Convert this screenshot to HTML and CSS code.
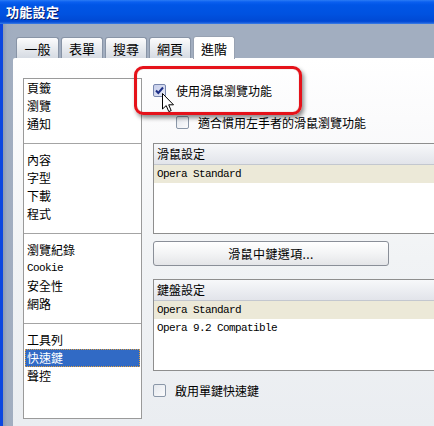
FILE: index.html
```html
<!DOCTYPE html>
<html>
<head>
<meta charset="utf-8">
<link rel="stylesheet" href="styles.css">
</head>
<body>
<div class="window">
  <div class="titlebar"><span class="title">功能設定</span></div>
  <div class="client">
    <div class="tabs">
      <div class="tab first">一般</div>
      <div class="tab">表單</div>
      <div class="tab">搜尋</div>
      <div class="tab">網頁</div>
      <div class="tab active">進階</div>
    </div>
    <div class="panel">
      <div class="nav">
        <div class="item">頁籤</div>
        <div class="item">瀏覽</div>
        <div class="item">通知</div>
        <div class="sep"></div>
        <div class="item">內容</div>
        <div class="item">字型</div>
        <div class="item">下載</div>
        <div class="item">程式</div>
        <div class="sep"></div>
        <div class="item">瀏覽紀錄</div>
        <div class="item latin">Cookie</div>
        <div class="item">安全性</div>
        <div class="item">網路</div>
        <div class="sep"></div>
        <div class="item">工具列</div>
        <div class="item selected">快速鍵</div>
        <div class="item">聲控</div>
      </div>
      <div class="content">
        <div class="check-row row1">
          <span class="cb checked"><svg width="11" height="11" viewBox="0 0 11 11"><path d="M2 5.5 L4.3 8 L9 2.5" fill="none" stroke="#1d2f86" stroke-width="2"/></svg></span>
          <span class="label">使用滑鼠瀏覽功能</span>
        </div>
        <div class="check-row row2">
          <span class="cb"></span>
          <span class="label">適合慣用左手者的滑鼠瀏覽功能</span>
        </div>
        <div class="listbox mouse">
          <div class="lb-head">滑鼠設定</div>
          <div class="lb-row sel">Opera Standard</div>
        </div>
        <div class="button">滑鼠中鍵選項...</div>
        <div class="listbox keys">
          <div class="lb-head">鍵盤設定</div>
          <div class="lb-row sel">Opera Standard</div>
          <div class="lb-row">Opera 9.2 Compatible</div>
        </div>
        <div class="check-row row3">
          <span class="cb"></span>
          <span class="label">啟用單鍵快速鍵</span>
        </div>
      </div>
      <div class="highlight"></div>
      <svg class="cursor" width="13" height="20" viewBox="0 0 13 20"><path d="M0.5 0.5 L0.5 16 L4.2 12.6 L6.8 18.6 L9.2 17.6 L6.7 11.8 L11.5 11.8 Z" fill="#fff" stroke="#000" stroke-width="1" stroke-linejoin="miter"/></svg>
    </div>
  </div>
</div>
</body>
</html>
```

FILE: styles.css
```css
* { box-sizing: border-box; }
html, body { margin: 0; padding: 0; }
body {
  width: 434px;
  height: 426px;
  overflow: hidden;
  font-family: "Noto Sans CJK TC", "Liberation Sans", sans-serif;
  font-size: 12px;
  color: #000;
}
.window {
  width: 434px;
  height: 426px;
  display: flex;
  flex-direction: column;
  overflow: hidden;
  background: #a2aec0;
}
.titlebar {
  height: 24px;
  flex: none;
  display: flex;
  align-items: center;
  padding-left: 6px;
  background: linear-gradient(#2b7cf5 0, #0a5ff0 2px, #0055e6 5px, #0052e0 14px, #0049d4 21px, #0a50d8 22px, #3d7fe6 24px);
}
.title {
  color: #fff;
  font-weight: bold;
  font-size: 13px;
  letter-spacing: 0.3px;
  text-shadow: 1px 1px 0 #0a1e6e;
  line-height: 1;
  margin-top: -1px;
}
.client {
  flex: 1;
  display: flex;
  flex-direction: column;
  border-left: 3px solid #0c46e0;
  padding-left: 10px;
  background: linear-gradient(90deg, #8d9bb2 0, #a0acbf 4px, #a2aec0 10px);
}
.tabs {
  height: 34px;
  flex: none;
  display: flex;
  align-items: flex-end;
  gap: 2px;
  padding-left: 3px;
  background: #a2aec0;
}
.tab {
  width: 42px;
  height: 21px;
  border: 1px solid #8894a6;
  border-bottom: none;
  border-radius: 3px 3px 0 0;
  background: linear-gradient(#fcfcfd, #e8ebef 50%, #d6dbe3);
  display: flex;
  align-items: center;
  justify-content: center;
  font-size: 13px;
  padding-top: 1px;
}
.tab.first { width: 43px; }
.tab.active {
  height: 23px;
  background: #fff;
  border-color: #98a2b2;
  margin-bottom: -1px;
  position: relative;
  z-index: 1;
}
.panel {
  flex: 1;
  position: relative;
  display: flex;
  align-items: flex-start;
  padding: 20px 0 0 10px;
  border-top-left-radius: 2px;
  background: linear-gradient(#ffffff 0, #fbfbfc 60px, #f1f3f5 200px, #eaedf1 368px);
}
.nav {
  width: 119px;
  height: 341px;
  flex: none;
  border: 1px solid #9a9a9a;
  background: #fff;
  display: flex;
  flex-direction: column;
}
.item {
  height: 18px;
  line-height: 18px;
  margin: 0 1px;
  padding-left: 2px;
  white-space: nowrap;
}
.item.latin {
  font-family: "Liberation Mono", monospace;
  font-size: 11px;
  letter-spacing: -0.6px;
}
.item.selected {
  background: #316ac5;
  color: #fff;
  outline: 1px dotted #e0a040;
  outline-offset: -1px;
}
.sep {
  height: 1px;
  margin: 10px 0 7px;
  background: #a4a4a4;
  flex: none;
}
.content {
  margin-left: 11px;
  display: flex;
  flex-direction: column;
  width: 300px;
  flex: none;
}
.check-row {
  height: 20px;
  display: flex;
  align-items: center;
  gap: 9px;
  white-space: nowrap;
}
.row1 { margin-top: 2px; gap: 10px; }
.row2 { margin-top: 12px; margin-left: 23px; }
.row3 { margin-top: 9px; }
.cb {
  width: 13px;
  height: 13px;
  flex: none;
  border: 1px solid #8a97a8;
  border-radius: 2px;
  background: linear-gradient(135deg, #e4e8ee, #fbfbfc);
  display: flex;
  align-items: center;
  justify-content: center;
}
.cb.checked {
  border-color: #7786ae;
  background: linear-gradient(135deg, #c5cdea, #e6e9f6);
}
.listbox {
  border: 1px solid #8e8e8e;
  border-right: none;
  background: #fff;
  display: flex;
  flex-direction: column;
}
.mouse { margin-top: 11px; height: 91px; }
.keys { margin-top: 13px; height: 92px; }
.lb-head {
  height: 21px;
  line-height: 20px;
  padding-left: 3px;
  border-bottom: 1px solid #c3c7cf;
  background: linear-gradient(#f7f8fa, #e8eaef 70%, #e2e4ea);
}
.lb-row {
  height: 18px;
  line-height: 18px;
  padding-left: 3px;
  font-family: "Liberation Mono", monospace;
  font-size: 11px;
  letter-spacing: -0.6px;
  white-space: nowrap;
}
.lb-row.sel { background: #ece9d8; }
.button {
  margin-top: 7px;
  width: 236px;
  height: 25px;
  border: 1px solid #8a8f98;
  border-radius: 3px;
  background: linear-gradient(#ffffff, #f3f4f5 50%, #e4e5e8);
  display: flex;
  align-items: center;
  justify-content: center;
  letter-spacing: 0.4px;
}
.highlight {
  position: absolute;
  left: 121px;
  top: 8px;
  width: 168px;
  height: 49px;
  border: 3px solid #e5121a;
  border-radius: 9px;
  box-shadow: 2px 3px 4px rgba(0,0,0,0.45), inset 0 0 1px rgba(120,0,0,0.5);
}
.cursor {
  position: absolute;
  left: 149px;
  top: 35px;
}
```
